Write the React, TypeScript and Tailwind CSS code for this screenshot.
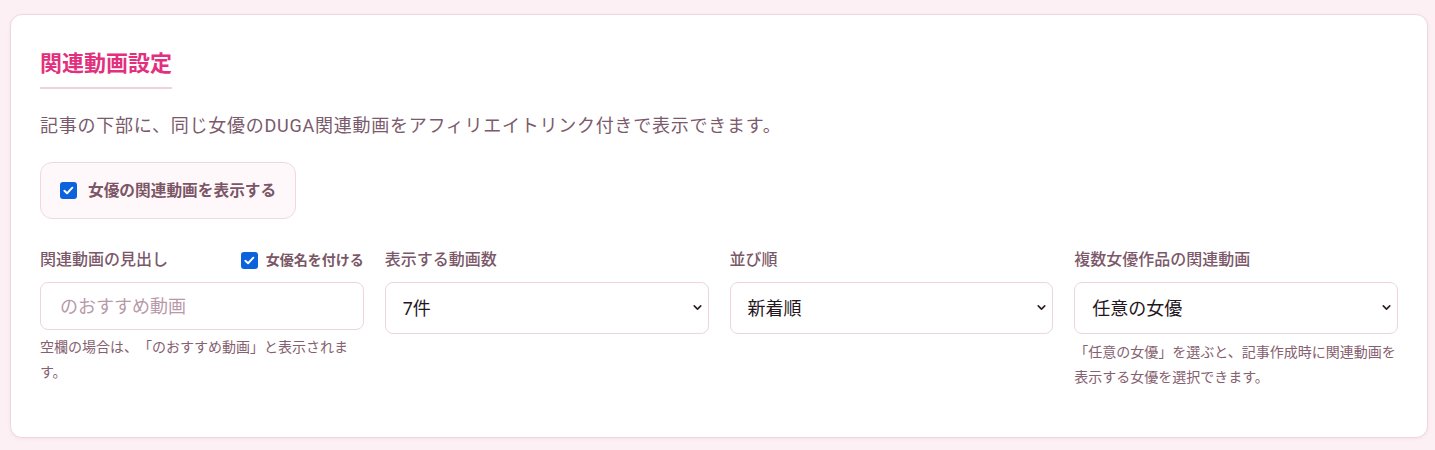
import { ChevronDown } from "lucide-react"

function CheckMark({ size }: { size: string }) {
  return (
    <span className={`${size} shrink-0 rounded-[3px] bg-[#0b62dc] flex items-center justify-center`}>
      <svg viewBox="0 0 16 16" className="w-[75%] h-[75%]" fill="none">
        <path d="M3 8.4 6.4 11.6 13 4.6" stroke="white" strokeWidth="2.4" strokeLinecap="round" strokeLinejoin="round" />
      </svg>
    </span>
  )
}

function SelectField({ label, value, options }: { label: string; value: string; options: string[] }) {
  return (
    <div className="flex flex-col">
      <div className="h-6 flex items-center text-[16px] font-medium text-[#7b5869]">{label}</div>
      <div className="relative mt-[10px]">
        <select
          defaultValue={value}
          className="appearance-none w-full h-[52px] rounded-lg border border-[#ecd5e0] bg-white pl-[17px] pr-8 text-[18px] text-[#24161d] outline-none"
        >
          {options.map((o) => (
            <option key={o}>{o}</option>
          ))}
        </select>
        <ChevronDown className="absolute right-[5px] top-[19px] size-[13px] text-[#2e1e27] pointer-events-none" strokeWidth={3} />
      </div>
    </div>
  )
}

export default function App() {
  return (
    <div className="min-h-screen bg-[#fcf0f4] pt-[14px] pb-[12px] pl-[10px] pr-[7px] font-['Roboto','Noto_Sans_CJK_JP',sans-serif] [text-spacing-trim:space-all]">
      <div className="bg-white border border-[#f0d6e1] rounded-xl shadow-[0_1px_3px_rgba(200,120,160,0.12)] px-[29px] pt-8 pb-[47px]">
        <h2 className="inline-block text-[22px] leading-[33px] font-bold text-[#e2307f] pb-[7px] border-b-2 border-[#ecd2de]">
          関連動画設定
        </h2>

        <p className="mt-[22px] text-[18px] leading-[29px] tracking-[0.75px] text-[#7a5a6b]">
          記事の下部に、同じ女優のDUGA関連動画をアフィリエイトリンク付きで表示できます。
        </p>

        <div className="mt-[22px] inline-flex h-[57px] items-center gap-[11px] rounded-xl border border-[#f0d8e3] bg-[#fff8fb] px-[19px]">
          <CheckMark size="size-[17px]" />
          <span className="text-[15.7px] font-bold text-[#7b5666]">女優の関連動画を表示する</span>
        </div>

        <div className="mt-[29px] grid grid-cols-4 gap-[21px] items-start">
          <div className="flex flex-col">
            <div className="h-6 flex items-center justify-between">
              <span className="text-[16px] font-medium text-[#7b5869]">関連動画の見出し</span>
              <label className="flex items-center gap-2">
                <CheckMark size="size-[17px]" />
                <span className="text-[14px] font-bold text-[#7b5666]">女優名を付ける</span>
              </label>
            </div>
            <input
              type="text"
              placeholder="のおすすめ動画"
              className="mt-[10px] h-[48px] w-full rounded-lg border border-[#ecd5e0] bg-white px-[19px] text-[18px] text-[#24161d] placeholder-[#b899a9] outline-none"
            />
            <p className="mt-[5px] text-[14px] leading-[25px] text-[#85606f]">
              空欄の場合は、「のおすすめ動画」と表示されます。
            </p>
          </div>

          <SelectField label="表示する動画数" value="7件" options={["3件", "5件", "7件", "10件"]} />
          <SelectField label="並び順" value="新着順" options={["新着順", "人気順"]} />

          <div className="flex flex-col">
            <SelectField label="複数女優作品の関連動画" value="任意の女優" options={["任意の女優", "全ての女優"]} />
            <p className="mt-[6px] text-[14px] leading-[25px] text-[#85606f]">
              「任意の女優」を選ぶと、記事作成時に関連動画を表示する女優を選択できます。
            </p>
          </div>
        </div>
      </div>
    </div>
  )
}
